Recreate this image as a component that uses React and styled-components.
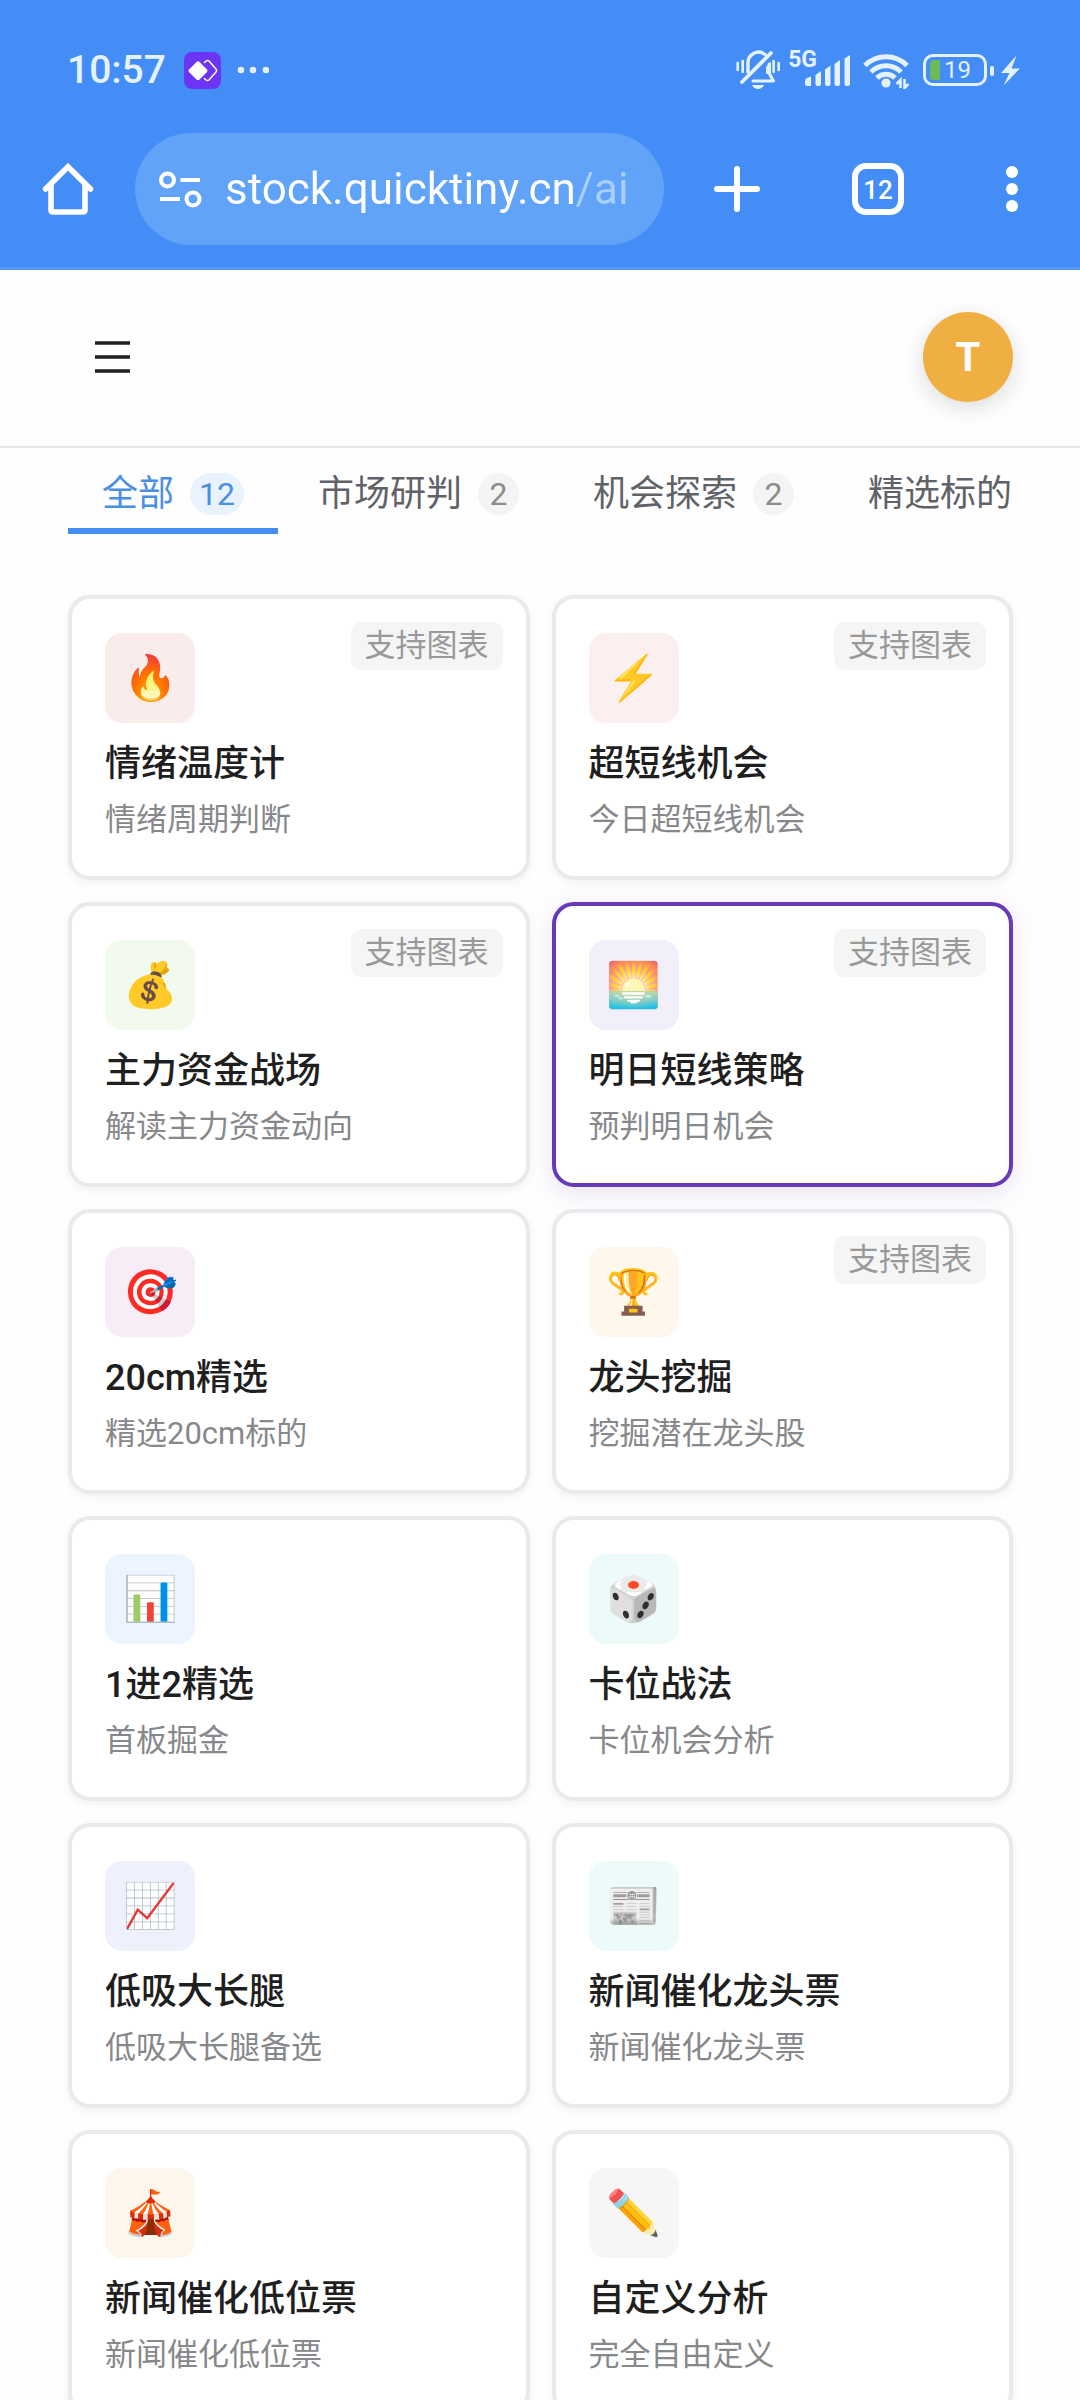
import React from 'react';
import styled, { createGlobalStyle } from 'styled-components'

const GlobalStyle = createGlobalStyle`
  * {
    box-sizing: border-box;
  }
  body {
    margin: 0;
    background: #fefefe;
    font-family: Roboto, "Noto Sans CJK SC", sans-serif;
  }
  button, input {
    font: inherit;
    color: inherit;
    border: 0;
    margin: 0;
    padding: 0;
    background: none;
  }
  svg {
    display: block;
  }
`

const Screen = styled.div`
  display: flex;
  flex-direction: column;
  height: 100vh;
  overflow: hidden;
`

/* phone status bar + browser toolbar */
const Chrome = styled.header`
  flex: none;
  background: #448df7;
  border-bottom: 3px solid #5697f4;
  color: #fff;
`
const StatusBar = styled.div`
  display: flex;
  align-items: center;
  justify-content: space-between;
  height: 96px;
  padding: 44px 60px 0 67px;
  color: #e4f2fe;
`
const StatusSide = styled.div`
  display: flex;
  align-items: center;
`
const Clock = styled.span`
  font-size: 39px;
  font-weight: 500;
  line-height: 52px;
  margin-right: 18px;
`
const AppBadge = styled.svg`
  margin-right: 16px;
`
const Network = styled.span`
  align-self: flex-start;
  margin: -3px -12px 0 7px;
  font-size: 23px;
  font-weight: 700;
  line-height: 26px;
`
const Signal = styled.svg`
  margin-right: 12px;
`
const Battery = styled.span`
  display: flex;
  align-items: center;
  gap: 4px;
  width: 64px;
  height: 32px;
  margin-left: 14px;
  padding-left: 4px;
  border: 3px solid #e4f2fe;
  border-radius: 10px;
  font-size: 24px;
  line-height: 26px;
`
const BatteryLevel = styled.span`
  width: 10px;
  height: 20px;
  border-radius: 4px 1px 1px 4px;
  background: #6cba55;
`

const Toolbar = styled.div`
  display: flex;
  align-items: center;
  padding: 37px 50px 22px 42px;
`
const IconButton = styled.button`
  display: flex;
  flex: none;
  justify-content: center;
  width: ${props => props.$width || 52}px;
`
const AddressBar = styled.div`
  display: flex;
  align-items: center;
  flex: 1;
  min-width: 0;
  height: 112px;
  margin: 0 48px 0 41px;
  padding: 0 28px 0 24px;
  border-radius: 56px;
  background: #60a3f8;
`
const Url = styled.input`
  flex: 1;
  min-width: 0;
  margin-left: 23px;
  font-size: 44px;
  line-height: 56px;
  /* the host is solid white, the path after it is dimmed */
  background: linear-gradient(to right, #fff 8em, #a8d0fc 8em);
  background-clip: text;
  color: transparent;
  outline: 0;
`
const Actions = styled.div`
  display: flex;
  align-items: center;
  gap: 90px;
`
const TabCount = styled.button`
  width: 52px;
  height: 52px;
  border: 6px solid #fff;
  border-radius: 14px;
  font-size: 26px;
  font-weight: 500;
  line-height: 42px;
  text-align: center;
`

/* site header */
const SiteHeader = styled.div`
  display: flex;
  flex: none;
  align-items: center;
  justify-content: space-between;
  height: 178px;
  padding: 0 67px 2px 95px;
  border-bottom: 2px solid #e6e7ea;
  background: #fefefe;
`
const Avatar = styled.button`
  width: 90px;
  height: 90px;
  border-radius: 50%;
  background: #efaf42;
  box-shadow: 0 6px 22px rgba(0, 0, 0, 0.14);
  color: #fff;
  font-size: 40px;
  font-weight: 700;
  text-align: center;
`

const Main = styled.main`
  flex: 1;
  min-height: 0;
  padding: 0 67px 0 68px;
  overflow: hidden;
`
const Tabs = styled.nav`
  display: flex;
  gap: 6px;
  height: 86px;
  margin-bottom: 61px;
`
const Tab = styled.button`
  display: flex;
  flex: none;
  align-items: center;
  gap: 16px;
  padding: 16px 34px 5px;
  border-bottom: 6px solid ${props => props.$active ? '#448df0' : 'transparent'};
  color: ${props => props.$active ? '#4a8fe3' : '#5f6368'};
  font-size: 36px;
  line-height: 46px;
  white-space: nowrap;
`
const Count = styled.span`
  min-width: 41px;
  padding: 0 9px;
  border-radius: 21px;
  background: ${props => props.$active ? '#e8f3fe' : '#f4f4f4'};
  color: ${props => props.$active ? '#4a8fe3' : '#8c8c8c'};
  font-size: 32px;
  line-height: 42px;
  text-align: center;
`

const Grid = styled.div`
  display: grid;
  grid-template-columns: 1fr 1fr;
  gap: 22px;
`
const Card = styled.button`
  position: relative;
  display: flex;
  flex-direction: column;
  align-items: flex-start;
  padding: 34px 33px;
  border: 4px solid ${props => props.$selected ? '#673ab7' : '#e9eaee'};
  border-radius: 22px;
  background: #fff;
  box-shadow: ${props => props.$selected
    ? '0 6px 24px rgba(103, 58, 183, 0.14)'
    : '0 3px 10px rgba(0, 0, 0, 0.05)'};
  text-align: left;
`
const Tile = styled.span`
  display: flex;
  align-items: center;
  justify-content: center;
  width: 90px;
  height: 90px;
  border-radius: 17px;
  background: ${props => props.$tint};
  font-size: 44px;
  line-height: 50px;
`
const Title = styled.span`
  margin-top: 18px;
  color: #1f1f1f;
  font-size: 36px;
  font-weight: 500;
  line-height: 46px;
`
const Subtitle = styled.span`
  margin-top: 11px;
  color: #87888b;
  font-size: 31px;
  line-height: 44px;
`
const ChartTag = styled.span`
  position: absolute;
  top: 23px;
  right: 23px;
  padding: 0 14px;
  border-radius: 11px;
  background: #f5f5f5;
  color: #999;
  font-size: 31px;
  line-height: 48px;
`

const tabs = [
  { name: '全部', count: 12 },
  { name: '市场研判', count: 2 },
  { name: '机会探索', count: 2 },
  { name: '精选标的' },
]

const cards = [
  { icon: '🔥', tint: '#fbecec', title: '情绪温度计', text: '情绪周期判断', chart: true },
  { icon: '⚡', tint: '#fbf0ef', title: '超短线机会', text: '今日超短线机会', chart: true },
  { icon: '💰', tint: '#f2f9ed', title: '主力资金战场', text: '解读主力资金动向', chart: true },
  { icon: '🌅', tint: '#f2eefa', title: '明日短线策略', text: '预判明日机会', chart: true, selected: true },
  { icon: '🎯', tint: '#f8edf6', title: '20cm精选', text: '精选20cm标的' },
  { icon: '🏆', tint: '#fef8ec', title: '龙头挖掘', text: '挖掘潜在龙头股', chart: true },
  { icon: '📊', tint: '#ecf5fe', title: '1进2精选', text: '首板掘金' },
  { icon: '🎲', tint: '#edfafa', title: '卡位战法', text: '卡位机会分析' },
  { icon: '📈', tint: '#eef0fb', title: '低吸大长腿', text: '低吸大长腿备选' },
  { icon: '📰', tint: '#edfafa', title: '新闻催化龙头票', text: '新闻催化龙头票' },
  { icon: '🎪', tint: '#fdf6ec', title: '新闻催化低位票', text: '新闻催化低位票' },
  { icon: '✏️', tint: '#f6f6f6', title: '自定义分析', text: '完全自由定义' },
]

const AppIcon = () => (
  <AppBadge width="37" height="37" viewBox="0 0 37 37">
    <rect width="37" height="37" rx="8" fill="#6c35f3" />
    <path d="M20 11l2-2q1.500-1.200 3 0l7 8q1.200 1.500 0 3l-7 8q-1.500 1.200-3 0l-2-2" fill="none" stroke="#fff" strokeWidth="1.500" />
    <path d="M12.500 10q1.500-1.300 3 0l7.500 7.500q1 1.200 0 2.400L15.500 27.500q-1.500 1.300-3 0L5 20q-1.200-1.300 0-2.600z" fill="#fff" />
  </AppBadge>
)

const MoreDots = () => (
  <svg width="32" height="8" viewBox="0 0 32 8" fill="currentColor">
    <circle cx="4" cy="4" r="3.300" />
    <circle cx="16" cy="4" r="3.300" />
    <circle cx="29" cy="4" r="3.300" />
  </svg>
)

const MutedBell = () => (
  <svg width="45" height="40" viewBox="0 0 45 40" fill="none" stroke="currentColor" strokeWidth="3" strokeLinecap="round">
    <path d="M1.700 13v7M6.700 11v11M37.600 11v11M42.700 13v7" strokeWidth="2.600" />
    <path d="M12 22v-8.500A10.500 10.500 0 0 1 29 4.500" strokeWidth="3.400" />
    <path d="M6 32L35 3" strokeWidth="3.800" />
    <path d="M33 14v9l4.500 8H17" strokeLinejoin="round" />
    <path d="M30 17l5-5v12h-5z" fill="currentColor" stroke="none" />
    <path d="M16 35h12q-2 4-6 4t-6-4z" fill="currentColor" stroke="none" />
  </svg>
)

const SignalBars = () => (
  <Signal width="46" height="31" viewBox="0 0 46 31" fill="currentColor">
    <path d="M0 26q0-2 2-3l4-1.500V31H2q-2 0-2-2zM10.500 20l5.500-4v13q0 2-2 2h-1.500q-2 0-2-2zM20 14.500l5.500-4V29q0 2-2 2H22q-2 0-2-2zM29.500 9L35 5v24q0 2-2 2h-1.500q-2 0-2-2zM39.500 3.500L45 0v29q0 2-2 2h-1.500q-2 0-2-2z" />
  </Signal>
)

const Wifi = () => (
  <svg width="46" height="37" viewBox="0 0 46 37" fill="none" stroke="currentColor" strokeWidth="5">
    <path d="M2 13.500a29.500 29.500 0 0 1 42 0M8 20a21 21 0 0 1 30 0M14 26a12.700 12.700 0 0 1 18 0" />
    <circle cx="23" cy="31" r="4.600" fill="currentColor" stroke="none" />
    <path d="M37.500 36v-8l-4 4M41.500 27v9l4-4" strokeWidth="2.600" />
  </svg>
)

const BatteryCap = () => (
  <svg width="33" height="31" viewBox="0 0 33 31" fill="currentColor">
    <rect x="3" y="11" width="4" height="10" rx="2" />
    <path d="M29.500 0.500L14 18h8.500L16.500 30.500 33 13.500h-8.500z" />
  </svg>
)

const HomeIcon = () => (
  <svg width="52" height="52" viewBox="0 0 52 52" fill="none" stroke="currentColor" strokeWidth="5.600" strokeLinecap="round" strokeLinejoin="miter">
    <path d="M3.500 26L26 3.800 48.500 26" />
    <path d="M9 22v25q0 2 2 2h30q2 0 2-2V22" />
  </svg>
)

const TuneIcon = () => (
  <svg width="43" height="37" viewBox="0 0 43 37" fill="none" stroke="currentColor" strokeWidth="4">
    <circle cx="8.500" cy="9" r="6.500" />
    <circle cx="34" cy="28" r="6.500" />
    <path d="M21.500 9H41M1 28h20" />
  </svg>
)

const PlusIcon = () => (
  <svg width="46" height="46" viewBox="0 0 46 46" stroke="currentColor" strokeWidth="6" strokeLinecap="round">
    <path d="M23 3v40M3 23h40" />
  </svg>
)

const KebabIcon = () => (
  <svg width="12" height="46" viewBox="0 0 12 46" fill="currentColor">
    <circle cx="6" cy="6" r="6" />
    <circle cx="6" cy="23" r="6" />
    <circle cx="6" cy="40" r="6" />
  </svg>
)

const MenuIcon = () => (
  <svg width="36" height="32" viewBox="0 0 36 32" stroke="#211f1f" strokeWidth="3.500">
    <path d="M0 2h35M0 16h35M0 30h35" />
  </svg>
)

export default function App() {
  return (
    <Screen>
      <GlobalStyle />
      <Chrome>
        <StatusBar>
          <StatusSide>
            <Clock>10:57</Clock>
            <AppIcon />
            <MoreDots />
          </StatusSide>
          <StatusSide>
            <MutedBell />
            <Network>5G</Network>
            <SignalBars />
            <Wifi />
            <Battery><BatteryLevel />19</Battery>
            <BatteryCap />
          </StatusSide>
        </StatusBar>
        <Toolbar>
          <IconButton aria-label="主页"><HomeIcon /></IconButton>
          <AddressBar>
            <IconButton $width={43} aria-label="网站设置"><TuneIcon /></IconButton>
            <Url aria-label="网址" defaultValue="stock.quicktiny.cn/ai" spellCheck={false} />
          </AddressBar>
          <Actions>
            <IconButton $width={50} aria-label="新标签页"><PlusIcon /></IconButton>
            <TabCount>12</TabCount>
            <IconButton $width={36} aria-label="更多"><KebabIcon /></IconButton>
          </Actions>
        </Toolbar>
      </Chrome>

      <SiteHeader>
        <IconButton $width={36} aria-label="菜单"><MenuIcon /></IconButton>
        <Avatar>T</Avatar>
      </SiteHeader>

      <Main>
        <Tabs>
          {tabs.map((tab, i) => (
            <Tab key={tab.name} $active={i === 0}>
              {tab.name}
              {tab.count && <Count $active={i === 0}>{tab.count}</Count>}
            </Tab>
          ))}
        </Tabs>
        <Grid>
          {cards.map(card => (
            <Card key={card.title} $selected={card.selected}>
              <Tile $tint={card.tint}>{card.icon}</Tile>
              <Title>{card.title}</Title>
              <Subtitle>{card.text}</Subtitle>
              {card.chart && <ChartTag>支持图表</ChartTag>}
            </Card>
          ))}
        </Grid>
      </Main>
    </Screen>
  )
}
